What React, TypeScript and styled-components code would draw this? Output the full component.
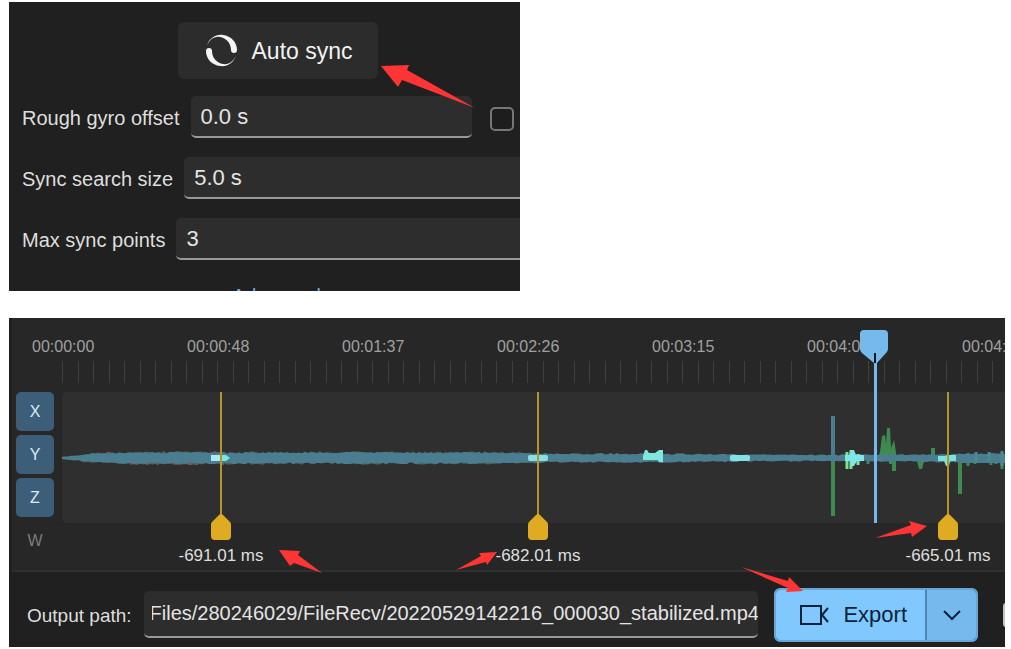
import React, { useLayoutEffect, useRef } from "react";
import styled, { createGlobalStyle } from "styled-components";

const GlobalStyle = createGlobalStyle`
  * { box-sizing: border-box; }
  body {
    margin: 0;
    background: #ffffff;
    font-family: "Liberation Sans", Arial, sans-serif;
  }
`;

const Page = styled.main`
  display: flex;
  flex-direction: column;
  gap: 27px;
  padding: 2px 6px 2px 9px;
`;

const Panel = styled.section`
  position: relative;
  background: #202020;
  color: #dedede;
  overflow: hidden;
`;

const SyncPanel = styled(Panel)`
  width: 100%;
  max-width: 511px;
  padding-top: 20px;
`;

const Centered = styled.div`
  display: flex;
  justify-content: center;
  padding-left: 26px;
`;

const SyncButton = styled.button`
  display: flex;
  align-items: center;
  gap: 14px;
  height: 57px;
  padding: 0 25px 0 27px;
  border: 0;
  border-radius: 6px;
  background: #2c2c2c;
  color: #f2f2f2;
  font: 23px/28px "Liberation Sans", Arial, sans-serif;
`;

const SettingsForm = styled.form`
  display: flex;
  flex-direction: column;
  gap: 19px;
  padding-top: 17px;
`;

const SettingRow = styled.div<{ $inset?: boolean }>`
  display: flex;
  align-items: center;
  gap: 11px;
  padding-left: 13px;
  padding-right: ${(p) => (p.$inset ? "6px" : "0")};
`;

const FieldLabel = styled.label<{ $size?: number }>`
  flex: none;
  padding-top: 2px;
  font-size: ${(p) => p.$size ?? 20}px;
  line-height: 24px;
`;

const TextField = styled.input<{ $open?: boolean }>`
  flex: 1;
  min-width: 0;
  height: 42px;
  padding: 1px 10px 0;
  border: 0;
  border-bottom: 2px solid #999999;
  border-radius: ${(p) => (p.$open ? "5px 0 0 5px" : "5px")};
  background: #2d2d2d;
  color: #e4e4e4;
  font: 22px/26px "Liberation Sans", Arial, sans-serif;
  outline: none;
`;

const CheckBox = styled.input`
  appearance: none;
  flex: none;
  width: 24px;
  height: 24px;
  margin: 4px 0 0 7px;
  border: 2px solid #777777;
  border-radius: 5px;
  background: #1d1d1d;
`;

const AdvancedClip = styled(Centered)`
  height: 31px;
  padding-top: 24px;
  padding-left: 24px;
  overflow: hidden;
`;

const AdvancedLink = styled.a`
  color: #76a9d6;
  font-size: 20px;
  line-height: 24px;
  text-decoration: none;
`;

const Arrows = styled.svg`
  position: absolute;
  top: 0;
  left: 0;
  pointer-events: none;
  fill: #ff3434;
`;

const ExportPanel = styled(Panel)`
  border-left: 3px solid #1f1f1f;
`;

const Timeline = styled.div`
  padding-bottom: 10px;
  border-bottom: 2px solid #303030;
  background: #272727;
`;

const Ruler = styled.div`
  height: 74px;
  padding-top: 19px;
  overflow: hidden;
`;

const RulerLabels = styled.div`
  display: flex;
  padding-left: 20px;
  color: #a0a0a0;
  font-size: 16px;
  line-height: 20px;
`;

const RulerLabel = styled.span`
  flex: 0 0 155px;
`;

const Ticks = styled.svg`
  display: block;
  margin: 4px 0 0 50px;
`;

const Tracks = styled.div`
  display: flex;
  gap: 8px;
  padding-left: 4px;
`;

const AxisList = styled.div`
  display: flex;
  flex: none;
  flex-direction: column;
  gap: 4px;
`;

const AxisButton = styled.button<{ $active?: boolean }>`
  width: 38px;
  height: 39px;
  padding: 0;
  border: 0;
  border-radius: 5px;
  background: ${(p) => (p.$active ? "#3d5e78" : "transparent")};
  color: ${(p) => (p.$active ? "#dceaf5" : "#7c7c7c")};
  font: 16px/20px "Liberation Sans", Arial, sans-serif;
`;

const Plot = styled.div`
  position: relative;
  flex: 1;
  min-width: 0;
  height: 131px;
`;

const PlotSurface = styled.div`
  height: 100%;
  border-radius: 5px 0 0 5px;
  background: #2f2f2f;
  overflow: hidden;
`;

const SyncMark = styled.div<{ $at: number }>`
  position: absolute;
  top: 0;
  left: ${(p) => p.$at}px;
  display: flex;
  flex-direction: column;
  align-items: center;
  width: 100px;
  margin-left: -50px;
  color: #dedede;
  font-size: 17px;
  line-height: 20px;
  white-space: nowrap;
`;

const MarkShape = styled.svg`
  display: block;
  margin-bottom: 6px;
`;

const Playhead = styled.svg`
  position: absolute;
  top: -62px;
  left: 798px;
`;

const OutputBar = styled.div`
  display: flex;
  align-items: center;
  gap: 16px;
  height: 75px;
  padding: 11px 0 0 15px;
  overflow: hidden;
`;

const PathGroup = styled.div`
  display: flex;
  flex: 1;
  align-items: center;
  gap: 12px;
  min-width: 0;
`;

const PathField = styled(TextField)`
  height: 47px;
  margin-bottom: 2px;
  padding: 0 0 0 8px;
  font-size: 20px;
`;

const ExportGroup = styled.div`
  display: flex;
  flex: none;
  height: 54px;
  border: 2px solid #67a6d6;
  border-radius: 6px;
  overflow: hidden;
`;

const ExportButton = styled.button`
  display: flex;
  align-items: center;
  gap: 14px;
  padding: 0 18px 0 24px;
  border: 0;
  background: #80c8ff;
  color: #0b2238;
  font: 22px/26px "Liberation Sans", Arial, sans-serif;
`;

const ExportMenuButton = styled.button`
  display: grid;
  place-items: center;
  width: 51px;
  padding: 0;
  border: 0;
  border-left: 2px solid #4f86b2;
  background: #76b9ed;
`;

const EdgeCheck = styled(CheckBox)`
  width: 25px;
  margin: 0 -23px 0 9px;
  border-color: #c4c4c4;
  border-radius: 3px;
`;

const TIMES = ["00:00:00", "00:00:48", "00:01:37", "00:02:26", "00:03:15", "00:04:04", "00:04:53"];

const MARKS = [
  { at: 159, offset: "-691.01 ms" },
  { at: 476, offset: "-682.01 ms" },
  { at: 886, offset: "-665.01 ms" },
];

const MID = 66;

/* Half height of the gyro band at selected x positions. */
const ENVELOPE: [number, number][] = [
  [0, 1], [10, 2], [30, 4], [60, 5], [160, 5], [300, 5], [420, 5], [480, 4],
  [600, 4], [700, 3], [760, 3], [944, 4],
];

function halfHeight(x: number) {
  for (let i = 1; i < ENVELOPE.length; i++) {
    const [x1, h1] = ENVELOPE[i];
    const [x0, h0] = ENVELOPE[i - 1];
    if (x <= x1) return h0 + ((h1 - h0) * (x - x0)) / (x1 - x0);
  }
  return 3;
}

function noise(n: number) {
  const v = Math.sin(n * 12.9898) * 43758.5453;
  return v - Math.floor(v);
}

function band(from: number, to: number, seed: number, jitter: number) {
  const top: string[] = [];
  const bottom: string[] = [];
  for (let x = from; x <= to; x += 3) {
    const h = halfHeight(x);
    const j = jitter * Math.min(1, h / 5);
    top.push(`${x},${(MID - h - (noise(x + seed) - 0.4) * j).toFixed(1)}`);
    bottom.unshift(`${x},${(MID + h + (noise(x + seed * 3) - 0.4) * j).toFixed(1)}`);
  }
  return [...top, ...bottom].join(" ");
}

function Waveform() {
  return (
    <svg width="944" height="131" viewBox="0 0 944 131" aria-label="Gyro motion data" role="img">
      <polygon points={band(36, 162, 7, 4)} fill="#7d5561" />
      <polygon points={band(18, 480, 5, 3)} fill="#47695f" />
      <g stroke="#3f8a4e" strokeWidth="4" fill="none">
        <path d="M771 60V124" />
        <path d="M898 62V102" />
        <path d="M806 63v9M859 68v8M906 61v13M913 64v8M929 61v12M940 61v16M934 63v9" strokeWidth="3" />
        <path d="M871 56v8M829 69v3" strokeWidth="4" />
      </g>
      <path d="M816 66L818 60L820 44L823 43L824 52L825 36H828L829 56L832 48L834 60V79H830V68Z" fill="#3f8a4e" />
      <path d="M850 67l5 2l2 8h3l2-8h-12Z" fill="#3f8a4e" />
      <polygon points={band(0, 944, 11, 2)} fill="#4b7d90" />
      <path d="M769 24h4v46h-4Z" fill="#4b7d90" />
      <path d="M900 62h44v9h-44Z" fill="#4b7d90" />
      <path d="M927 60v9M940 59v15M914 60v10" stroke="#4b8a91" strokeWidth="3" />
      <path d="M785 60v17M789 58v19M796 62v11" stroke="#79e88a" strokeWidth="3" />
      <path d="M783 63h4l2-5h3l2 5h8v6h-7l-3 5h-3l-1-5h-5Z" fill="#80e5ea" />
      <path d="M149 63h9v6h-9Z" fill="#a8eaf5" />
      <path d="M158 63h6l4 3l-4 3h-6Z" fill="#7ee8d8" />
      <rect x="466" y="63" width="20" height="6" rx="2" fill="#88e0e5" />
      <path d="M581 64l2-6l2 0l2 3l6 0l4-3h4v12h-4l-1-2h-15Z" fill="#7ee8df" />
      <rect x="668" y="63" width="20" height="6" rx="2" fill="#83e1e6" />
      <path d="M876 64h7l2-1h9v6h-6l-1 5h-3l-2-5h-6Z" fill="#7ae4dc" />
    </svg>
  );
}

export default function App() {
  const pathRef = useRef<HTMLInputElement>(null);

  /* Keep the file name, at the end of the path, in view. */
  useLayoutEffect(() => {
    const el = pathRef.current;
    if (el) el.scrollLeft = el.scrollWidth;
  }, []);

  return (
    <>
      <GlobalStyle />
      <Page>
        <SyncPanel>
          <Centered>
            <SyncButton type="button">
              <svg width="33" height="33" viewBox="0 0 33 33" fill="#f4f4f4" aria-hidden="true">
                <path d="M2 12C4 4 11 0 18 1C26 2 32 8 32 16Q32 19 29 19Q26 19 26 16C26 9 21 4 15 3C9 2 4 6 2 12Z" />
                <path d="M31 21C29 29 22 33 15 32C7 31 1 25 1 17Q1 14 4 14Q7 14 7 17C7 24 12 29 18 30C24 31 29 27 31 21Z" />
              </svg>
              Auto sync
            </SyncButton>
          </Centered>
          <SettingsForm>
            <SettingRow $inset>
              <FieldLabel htmlFor="offset">Rough gyro offset</FieldLabel>
              <TextField id="offset" defaultValue="0.0 s" />
              <CheckBox type="checkbox" aria-label="Use rough gyro offset" />
            </SettingRow>
            <SettingRow>
              <FieldLabel htmlFor="search">Sync search size</FieldLabel>
              <TextField id="search" $open defaultValue="5.0 s" />
            </SettingRow>
            <SettingRow>
              <FieldLabel htmlFor="points">Max sync points</FieldLabel>
              <TextField id="points" $open defaultValue="3" />
            </SettingRow>
          </SettingsForm>
          <AdvancedClip>
            <AdvancedLink href="#advanced">Advanced</AdvancedLink>
          </AdvancedClip>
          <Arrows width="511" height="289" aria-hidden="true">
            <polygon points="372,64 400,63 398,68 466,106 393,78 389,85" />
          </Arrows>
        </SyncPanel>

        <ExportPanel>
          <Timeline>
            <Ruler>
              <RulerLabels>
                {TIMES.map((t) => (
                  <RulerLabel key={t}>{t}</RulerLabel>
                ))}
              </RulerLabels>
              <Ticks width="944" height="24" aria-hidden="true">
                {Array.from({ length: 61 }, (_, i) => (
                  <rect key={i} x={Math.round(i * 15.5)} y="0" width="1" height="22" fill="#404040" />
                ))}
              </Ticks>
            </Ruler>
            <Tracks>
              <AxisList>
                <AxisButton type="button" $active>X</AxisButton>
                <AxisButton type="button" $active>Y</AxisButton>
                <AxisButton type="button" $active>Z</AxisButton>
                <AxisButton type="button">W</AxisButton>
              </AxisList>
              <Plot>
                <PlotSurface>
                  <Waveform />
                </PlotSurface>
                {MARKS.map((m) => (
                  <SyncMark key={m.at} $at={m.at}>
                    <MarkShape width="22" height="148" viewBox="0 0 22 148" aria-hidden="true">
                      <path d="M10 0h2v126h-2Z" fill="#b3952e" />
                      <path d="M11 122Q12 122 13 123L20 130Q21 131 21 133V144Q21 148 17 148H5Q1 148 1 144V133Q1 131 2 130L9 123Q10 122 11 122Z" fill="#dfab22" />
                    </MarkShape>
                    {m.offset}
                  </SyncMark>
                ))}
                <Playhead width="28" height="193" viewBox="0 0 28 193" aria-hidden="true">
                  <path d="M4 0H24Q28 0 28 4V19Q28 21 26 23L17 33V193H14V33L2 23Q0 21 0 19V4Q0 0 4 0Z" fill="#76b9ed" />
                  <path d="M14 23h2v10h-2Z" fill="#081420" />
                </Playhead>
              </Plot>
            </Tracks>
          </Timeline>
          <OutputBar>
            <PathGroup>
              <FieldLabel htmlFor="path" $size={19}>Output path:</FieldLabel>
              <PathField
                id="path"
                ref={pathRef}
                defaultValue="Files/280246029/FileRecv/20220529142216_000030_stabilized.mp4"
              />
            </PathGroup>
            <ExportGroup>
              <ExportButton type="button">
                <svg width="29" height="22" viewBox="0 0 29 22" fill="none" stroke="#0b2238" strokeWidth="2" aria-hidden="true">
                  <path d="M1 2H21V20H1Z" />
                  <path d="M28 4L22 11L28 18" />
                </svg>
                Export
              </ExportButton>
              <ExportMenuButton type="button" aria-label="Export options">
                <svg width="18" height="11" viewBox="0 0 18 11" fill="none" stroke="#0b2238" strokeWidth="2" aria-hidden="true">
                  <path d="M1 1L9 9L17 1" />
                </svg>
              </ExportMenuButton>
            </ExportGroup>
            <EdgeCheck type="checkbox" aria-label="Export setting" />
          </OutputBar>
          <Arrows width="993" height="329" viewBox="3 0 993 329" aria-hidden="true">
            <polygon points="270,232 291,233 289,237 313,255 285,245 281,248" />
            <polygon points="488,234 470,235 472,238 447,252 477,244 478,247" />
            <polygon points="918,208 900,203 902,207 866,220 902,215 903,219" />
            <polygon points="794,273 780,259 779,263 732,249 779,270 777,274" />
          </Arrows>
        </ExportPanel>
      </Page>
    </>
  );
}
